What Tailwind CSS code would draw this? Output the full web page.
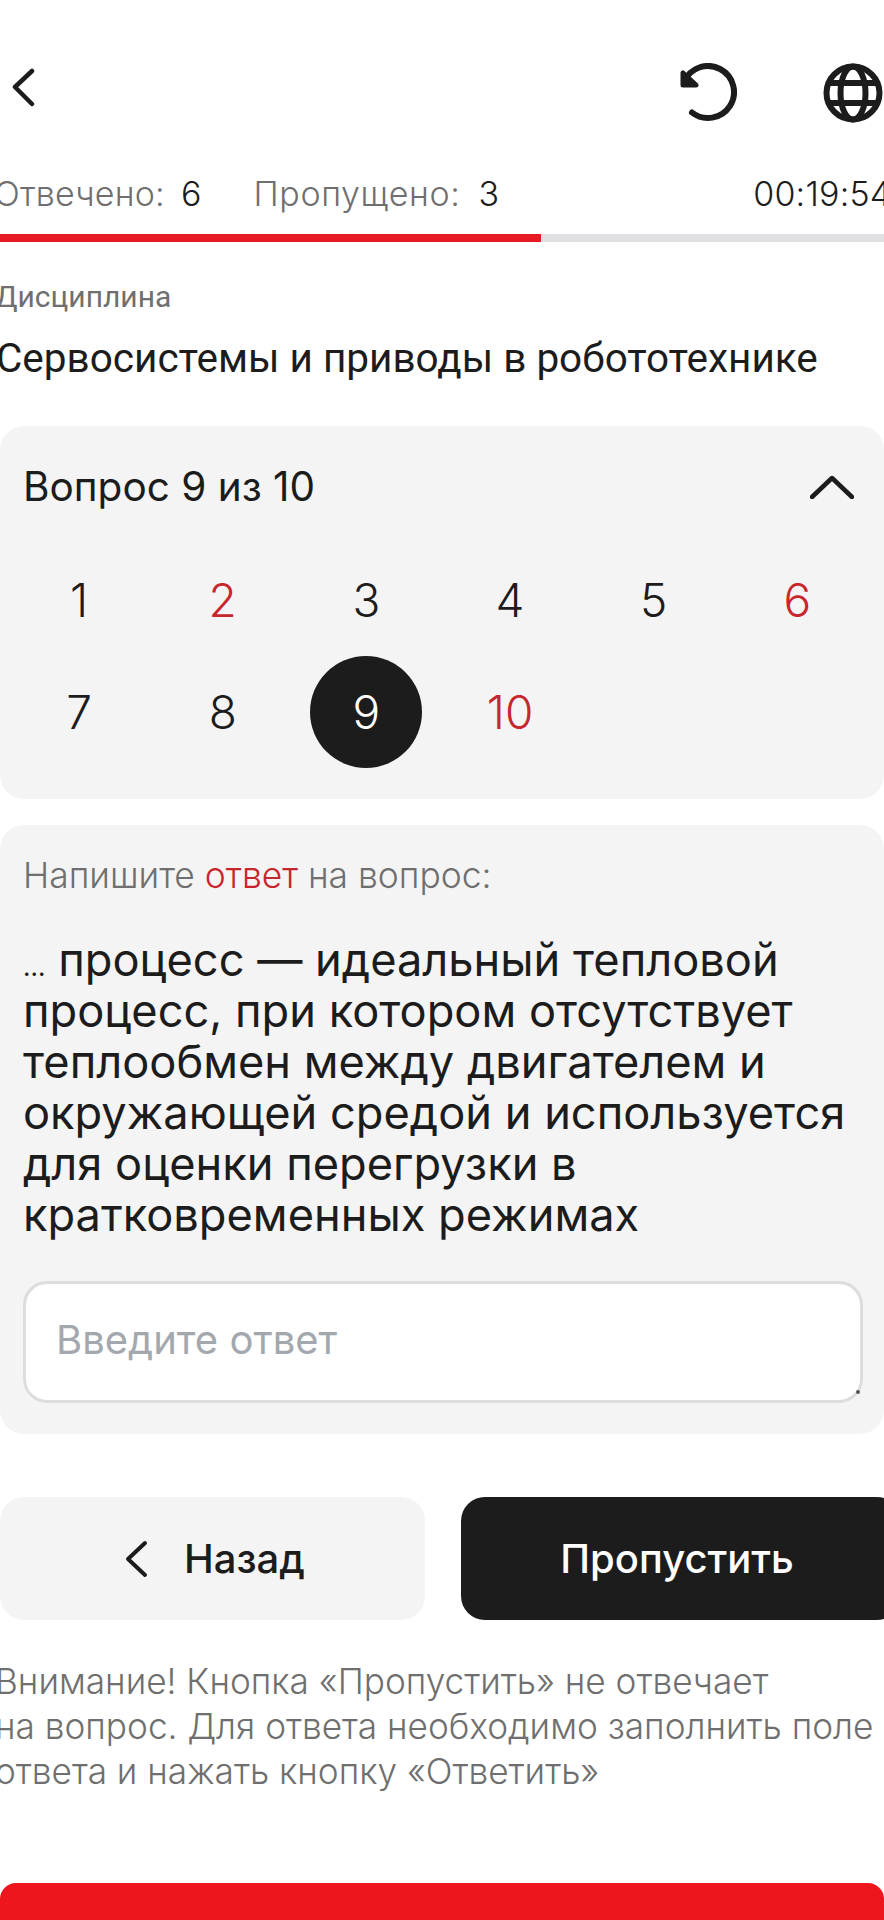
<!doctype html>
<html>
<head>
  <meta charset="UTF-8">
  <meta name="viewport" content="width=device-width, initial-scale=1.0">
  <script src="https://cdn.jsdelivr.net/npm/@tailwindcss/browser@4"></script>
</head>
<body class="bg-white">
<div class="w-[884px] h-[1920px] overflow-hidden font-['Inter',sans-serif] font-light text-[#1c1c1c]">

  <!-- Header -->
  <div class="flex items-center h-[59px] mt-[63px]">
    <svg class="ml-[10px] mb-[12px] w-[26px] h-[40px]" viewBox="0 0 26 40" fill="none" stroke="#1c1c1c" stroke-width="4.5" stroke-linecap="round" stroke-linejoin="round"><path d="M22 4 5 20l17 17" /></svg>
    <svg class="ml-[641px] w-[60px] h-[60px]" viewBox="0 0 60 60" fill="none" stroke="#1c1c1c" stroke-width="6" stroke-linecap="round" stroke-linejoin="round"><path d="M7 19A26 26 0 1 1 15 49.5" /><path d="M6 10v12h13z" fill="#1c1c1c" stroke-width="5" /></svg>
    <svg class="ml-[86px] w-[60px] h-[60px] shrink-0" viewBox="0 0 60 60" fill="none" stroke="#1c1c1c" stroke-width="6"><circle cx="30" cy="30" r="26.5" /><ellipse cx="30" cy="30" rx="12.5" ry="26.5" /><path d="M6 20h48M6 40h48" /></svg>
  </div>

  <!-- Stats -->
  <div class="flex items-center h-[40px] mt-[51px] text-[34px] tracking-[0.2px] whitespace-nowrap -ml-[6px]">
    <span class="text-[#6f6f6f]">Отвечено:</span>
    <span class="ml-[16px]">6</span>
    <span class="ml-[52px] text-[#6f6f6f] tracking-[0.6px]">Пропущено:</span>
    <span class="ml-[18px]">3</span>
    <span class="ml-[254px]">00:19:54</span>
  </div>

  <!-- Progress -->
  <div class="h-[8px] mt-[21px] bg-[#e0e0e4]">
    <div class="h-full bg-[#e61b23]" style="width: 541px"></div>
  </div>

  <!-- Discipline -->
  <p class="mt-[37px] -ml-[5px] font-['Roboto',sans-serif] font-normal text-[30px] leading-[36px] text-[#6f6f6f]">Дисциплина</p>
  <p class="mt-[20px] -ml-[4px] font-['Roboto',sans-serif] font-normal text-[40.5px] leading-[46px] whitespace-nowrap">Сервосистемы и приводы в робототехнике</p>

  <!-- Question nav -->
  <section class="mt-[45px] h-[373px] rounded-[24px] bg-[#f4f4f4] pt-[36px]">
    <div class="flex items-center justify-between h-[50px] pl-[23px] pr-[30px]">
      <h2 class="text-[40.5px] font-normal">Вопрос 9 из 10</h2>
      <svg class="w-[44px] h-[24px]" viewBox="0 0 44 24" fill="none" stroke="#1c1c1c" stroke-width="4.5" stroke-linecap="round" stroke-linejoin="round"><path d="M2 22 22 3l20 19" /></svg>
    </div>
    <div class="grid grid-cols-[repeat(6,112px)] gap-x-[31.7px] auto-rows-[112px] ml-[23px] mt-[32px] text-[46px]">
      <div class="flex items-center justify-center">1</div>
      <div class="flex items-center justify-center text-[#c9252d]">2</div>
      <div class="flex items-center justify-center">3</div>
      <div class="flex items-center justify-center">4</div>
      <div class="flex items-center justify-center">5</div>
      <div class="flex items-center justify-center text-[#c9252d]">6</div>
      <div class="flex items-center justify-center">7</div>
      <div class="flex items-center justify-center">8</div>
      <div class="flex items-center justify-center rounded-full bg-[#1c1c1c] text-white">9</div>
      <div class="flex items-center justify-center text-[#c9252d]">10</div>
    </div>
  </section>

  <!-- Question -->
  <section class="mt-[26px] h-[609px] rounded-[24px] bg-[#f4f4f4] pt-[30px] px-[23px]">
    <p class="text-[35.4px] leading-[42px] text-[#6f6f6f]">Напишите <span class="text-[#c9252d]">ответ</span> на вопрос:</p>
    <p class="mt-[37px] text-[45.2px] leading-[51px] whitespace-nowrap font-normal"><span class="text-[26px] leading-none">…</span> процесс — идеальный тепловой<br>процесс, при котором отсутствует<br>теплообмен между двигателем и<br>окружающей средой и используется<br>для оценки перегрузки в<br>кратковременных режимах</p>
    <div class="relative mt-[41px] w-[840px] h-[122px] rounded-[24px] border-[3px] border-[#dddddd] bg-white flex items-center pl-[30px] pb-[4px] text-[40px] font-normal text-[#a3a8ae]">
      Введите ответ
      <span class="absolute right-0 bottom-[6px] w-[4px] h-[4px] rounded-full bg-[#555555]"></span>
    </div>
  </section>

  <!-- Buttons -->
  <div class="flex mt-[63px] h-[123px] gap-[36px]">
    <button class="w-[425px] shrink-0 rounded-[24px] bg-[#f4f4f4] flex items-center justify-center gap-[36px] pl-[4px] text-[40px] font-medium">
      <svg class="w-[24px] h-[38px]" viewBox="0 0 24 38" fill="none" stroke="#1c1c1c" stroke-width="4" stroke-linecap="round" stroke-linejoin="round"><path d="M21 3 4 19l17 16" /></svg>
      Назад
    </button>
    <button class="w-[440px] shrink-0 rounded-[24px] bg-[#1c1c1c] text-white flex items-center justify-center pr-[8px] text-[40px] font-medium">Пропустить</button>
  </div>

  <!-- Note -->
  <p class="mt-[39px] -ml-[5px] text-[35.2px] leading-[45px] text-[#6f6f6f] whitespace-nowrap">Внимание! Кнопка «Пропустить» не отвечает<br>на вопрос. Для ответа необходимо заполнить поле<br>ответа и нажать кнопку «Ответить»</p>

  <!-- Submit -->
  <div class="mt-[89px] h-[60px] rounded-t-[16px] bg-[#ee151d]"></div>
</div>
</body>
</html>
